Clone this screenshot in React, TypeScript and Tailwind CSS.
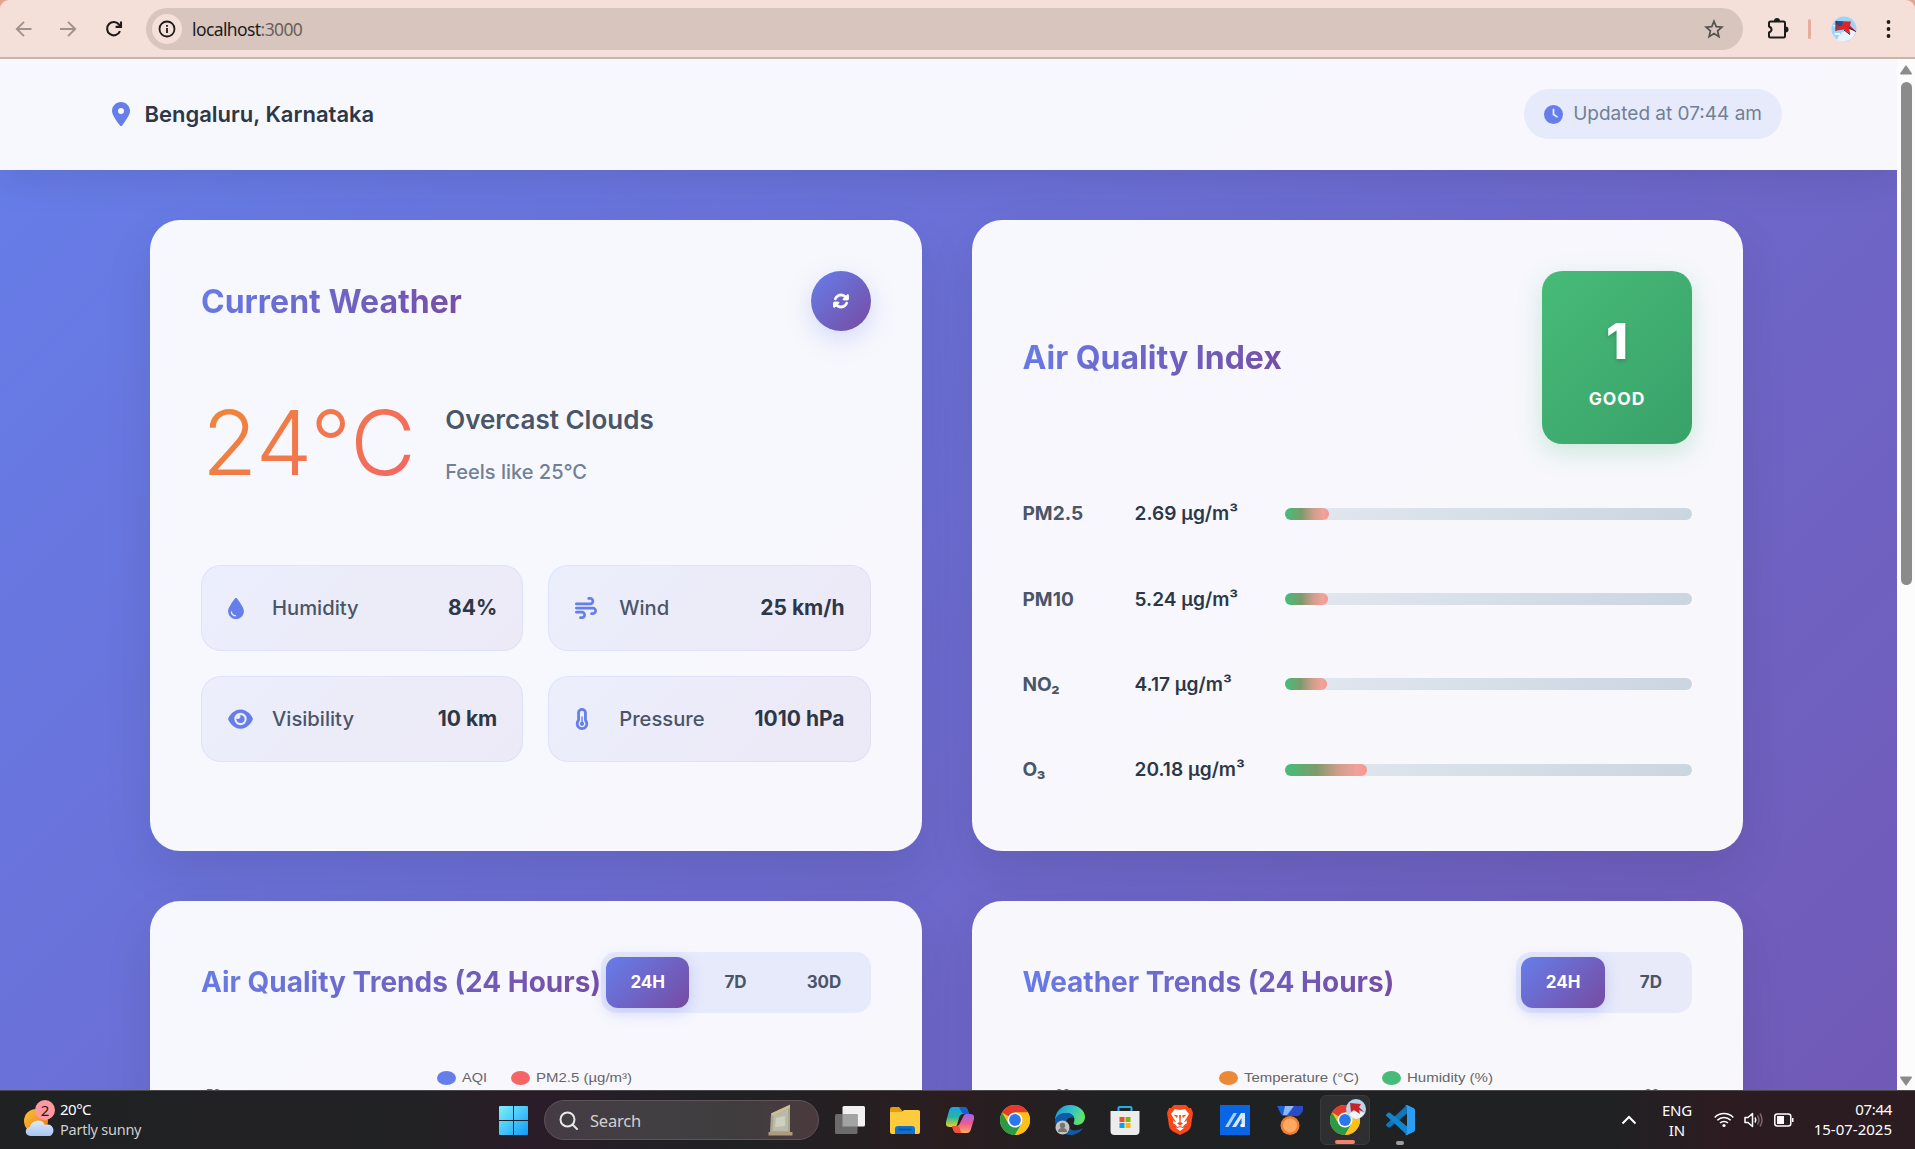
import React from "react";
import {
  FaLocationDot,
  FaClock,
  FaDroplet,
  FaWind,
  FaEye,
  FaTemperatureHalf,
  FaRotate,
} from "react-icons/fa6";

const ui = "font-['Noto_Sans','Open_Sans',sans-serif]";

function BrowserBar() {
  return (
    <div className="h-[59px] shrink-0 bg-[#e5a593]">
      <div className="flex h-full items-center rounded-t-[9px] border-b-2 border-[#c6b5ad] bg-[#f5e0d9] pl-3">
        <svg className="h-6 w-6 text-[#a0918c]" viewBox="0 0 24 24" fill="none" stroke="currentColor" strokeWidth="1.9">
          <path d="M19.500 12H5M12 4.800 4.800 12l7.200 7.200" />
        </svg>
        <svg className="ml-[20px] h-6 w-6 text-[#a0918c]" viewBox="0 0 24 24" fill="none" stroke="currentColor" strokeWidth="1.9">
          <path d="M4 12h15M12 4.800l7.200 7.200-7.200 7.200" />
        </svg>
        <svg className="ml-[22px] h-6 w-6 text-[#1d1b1a]" viewBox="0 0 24 24" fill="none" stroke="currentColor" strokeWidth="2.1">
          <path d="M18 14.200A6.700 6.700 0 1 1 17.300 7.800L19 9.600" />
          <path d="M19 4.500v5.400h-5.400" />
        </svg>
        <div className="ml-5 flex h-[42px] w-[1597px] items-center rounded-full bg-[#d8c6be] pl-1.5 pr-[19px]">
          <span className="flex h-[30px] w-[30px] items-center justify-center rounded-full bg-[#f5e0d9]">
            <svg className="h-[18px] w-[18px]" viewBox="0 0 18 18" fill="none" stroke="#1d1b1a" strokeWidth="1.8">
              <circle cx="9" cy="9" r="7.500" />
              <path d="M9 8v5M9 5v1.800" />
            </svg>
          </span>
          <span className={"mt-0.5 ml-2.5 flex-1 text-[17.500px] tracking-[-0.600px] text-[#1d1b1a] " + ui}>
            localhost<span className="text-[#6c605b]">:3000</span>
          </span>
          <svg className="h-5 w-5" viewBox="0 0 20 20" fill="none" stroke="#54504e" strokeWidth="1.7">
            <path d="M10 2.200l2.200 5.400 5.800.5-4.400 3.800 1.300 5.700-4.900-3-4.900 3 1.300-5.700L2 8.100l5.800-.5z" />
          </svg>
        </div>
        <svg className="ml-6 h-[22px] w-[22px]" viewBox="0 0 22 22" fill="none" stroke="#1d1b1a" strokeWidth="2" strokeLinejoin="round">
          <path d="M2 5q0-1.500 1.500-1.500h13q1.500 0 1.500 1.500v13q0 1.500-1.500 1.500h-13Q2 19.500 2 18v-3.500q2.500-1 2.500-3T2 8.500z" />
          <path d="M8 3a2 2 0 0 1 4 0zM18.500 9.500a2 2 0 0 1 0 4z" fill="#1d1b1a" />
        </svg>
        <span className="ml-[19px] h-5 w-[3px] rounded-full bg-[#e9ab9b]" />
        <svg className="ml-5 h-[26px] w-[26px]" viewBox="0 0 26 26">
          <circle cx="13" cy="13" r="12.500" fill="#9bd3fb" />
          <path d="M6 24Q10 12 25 14 24 24 13 25.500 9 25.500 6 24z" fill="#eaf3fd" />
          <path d="M3 17h6v2H4zM2 9h4v1.500H2z" fill="#eaf6ff" />
          <path d="M5 5l15 .5-1 4 6 6-7-3 1.500 6-6-5-8 1z" fill="#d8262b" />
          <path d="M5 5l7 .5-1 4-4 1z" fill="#274a94" />
          <path d="M5 5v10M13 14l6 4.500M18 12l7 3.500" stroke="#451417" fill="none" />
        </svg>
        <svg className="ml-5 h-5 w-5" viewBox="0 0 20 20" fill="#1d1b1a">
          <circle cx="11.500" cy="3" r="1.900" />
          <circle cx="11.500" cy="10" r="1.900" />
          <circle cx="11.500" cy="17" r="1.900" />
        </svg>
      </div>
    </div>
  );
}

const cardClass =
  "rounded-[30px] border border-white/20 bg-white/95 px-[50px] pt-[50px] shadow-[0_20px_50px_rgba(0,0,0,0.09)]";
const gradText = "bg-linear-[135deg] from-[#667eea] to-[#764ba2] bg-clip-text font-bold text-transparent";

function Stat({ icon, label, value }: { icon: React.ReactNode; label: string; value: string }) {
  return (
    <div className="flex h-[86px] items-center rounded-[20px] border border-[#667eea]/10 bg-linear-[135deg] from-[#667eea]/8 to-[#764ba2]/8 bg-origin-border px-[25px] text-[20.200px]">
      <span className="w-[30px] pl-px text-[#667eea]">{icon}</span>
      <span className="ml-[15px] flex-1 font-medium text-[#4a5568]">{label}</span>
      <span className="text-[21px] font-bold text-[#2d3748]">{value}</span>
    </div>
  );
}

const pollutants = [
  { name: "PM2.5", value: "2.69 µg/m³", width: 44 },
  { name: "PM10", value: "5.24 µg/m³", width: 43 },
  { name: "NO₂", value: "4.17 µg/m³", width: 42 },
  { name: "O₃", value: "20.18 µg/m³", width: 82 },
];

function Toggle({ items }: { items: string[] }) {
  return (
    <div className="flex h-[61px] shrink-0 gap-2.5 rounded-[15px] bg-[#667eea]/10 p-[5px] text-[17px] font-bold">
      {items.map((t, i) => (
        <span
          key={t}
          className={
            i === 0
              ? "flex w-[83.500px] items-center justify-center rounded-xl bg-linear-[135deg] from-[#667eea] to-[#764ba2] text-white shadow-[0_4px_15px_rgba(102,126,234,0.3)]"
              : "flex items-center justify-center px-[25px] font-bold text-[#4a5568]"
          }
        >
          {t}
        </span>
      ))}
    </div>
  );
}

function Legend({ color, label, width }: { color: string; label: string; width: number }) {
  return (
    <span className="flex items-center gap-1.5">
      <span className={"h-3.5 w-[19px] rounded-[50%] " + color} />
      <svg className="h-5" width={width} viewBox={`0 0 ${width} 20`}>
        <text x="0" y="14" textLength={width} lengthAdjust="spacingAndGlyphs" fill="#666" fontSize="12.500" fontFamily="Liberation Sans, sans-serif">
          {label}
        </text>
      </svg>
    </span>
  );
}

function Dashboard() {
  return (
    <div className="flex h-[1031px] shrink-0 bg-white font-[Inter,sans-serif]">
      <div className="h-full w-[1897px] overflow-hidden">
        <div className="h-[2220px] bg-linear-[135deg] from-[#667eea] to-[#764ba2]">
          <header className="flex h-[111px] items-center bg-white/95 pr-[115px] pb-px pl-[111.500px] shadow-[0_8px_40px_rgba(0,0,0,0.1)]">
            <FaLocationDot className="h-6 w-[18px] text-[#667eea]" />
            <span className="ml-[15px] flex-1 text-[22px] font-semibold text-[#2d3748]">Bengaluru, Karnataka</span>
            <div className="flex h-[50px] items-center gap-2.5 rounded-[25px] bg-[#667eea]/10 px-5 text-[19px] text-[#718096]">
              <FaClock className="text-[19px] text-[#667eea]" />
              Updated at 07:44 am
            </div>
          </header>
          <main className="grid grid-cols-2 gap-[50px] pl-[150px] pr-[154px] pt-[50px]">
            <section className={cardClass + " h-[631px]"}>
              <div className="flex h-[60px] items-center justify-between">
                <h2 className={"mt-0.5 text-[32px] " + gradText}>Current Weather</h2>
                <button className="flex h-[60px] w-[60px] items-center justify-center rounded-full bg-linear-[135deg] from-[#667eea] to-[#764ba2] text-base text-white shadow-[0_8px_25px_rgba(102,126,234,0.25)]">
                  <FaRotate stroke="currentColor" strokeWidth="28" />
                </button>
              </div>
              <div className="mt-[50px] flex h-[120px] items-center">
                <span className="ml-px bg-linear-[135deg] from-[#ed8936] to-[#f56565] bg-clip-text pt-[3px] text-[90px] leading-none font-light text-transparent">
                  24°C
                </span>
                <div className="ml-[29.500px] pt-1">
                  <p className="text-[26px] leading-[42px] font-semibold text-[#4a5568]">Overcast Clouds</p>
                  <p className="mt-[15px] text-xl leading-8 font-medium text-[#718096]">Feels like 25°C</p>
                </div>
              </div>
              <div className="mt-[64px] grid grid-cols-2 gap-[25px]">
                <Stat icon={<FaDroplet className="h-[21px] w-4" />} label="Humidity" value="84%" />
                <Stat icon={<FaWind className="h-[22px] w-[22px]" />} label="Wind" value="25 km/h" />
                <Stat icon={<FaEye className="h-[22px] w-[25px]" />} label="Visibility" value="10 km" />
                <Stat icon={<FaTemperatureHalf className="h-[22px] w-3.5" />} label="Pressure" value="1010 hPa" />
              </div>
            </section>
            <section className={cardClass + " h-[631px]"}>
              <div className="flex h-[173px] items-center justify-between">
                <h2 className={"text-[32px] " + gradText}>Air Quality Index</h2>
                <div className="flex h-[173px] w-[150px] flex-col items-center rounded-[20px] bg-linear-[135deg] from-[#48bb78] to-[#38a169] pt-[45px] text-white shadow-[0_8px_25px_rgba(72,187,120,0.25)]">
                  <span className="text-[50px] leading-[50px] font-extrabold [text-shadow:0_2px_4px_rgba(0,0,0,0.2)]">1</span>
                  <span className="mt-[18px] text-[17.500px] leading-[30px] font-bold tracking-[0.9px]">GOOD</span>
                </div>
              </div>
              <div className="mt-[27px] flex flex-col">
                {pollutants.map((p) => (
                  <div key={p.name} className="flex h-[85.300px] items-center text-[19.100px]">
                    <span className="w-[112px] font-bold text-[#4a5568]">{p.name}</span>
                    <span className="w-[150px] font-semibold text-[#2d3748]">{p.value}</span>
                    <div className="h-3 flex-1 rounded-full bg-linear-[135deg] from-[#e2e8f0] to-[#cbd5e0]">
                      <div
                        className="h-3 rounded-full bg-[linear-gradient(90deg,#48bb78_5%,#7f9a6c_38%,#d09d8b_65%,#efa39b_88%,#fb928b)]"
                        style={{ width: p.width }}
                      />
                    </div>
                  </div>
                ))}
              </div>
            </section>
            <section className={cardClass + " h-[800px]"}>
              <div className="flex justify-between">
                <h2 className={"-mt-0.5 self-center text-[28px] whitespace-nowrap " + gradText}>Air Quality Trends (24 Hours)</h2>
                <Toggle items={["24H", "7D", "30D"]} />
              </div>
              <div className="mt-[55px] flex gap-6 pl-[236px]">
                <Legend color="bg-[#667eea]" label="AQI" width={25} />
                <Legend color="bg-[#f56565]" label="PM2.5 (µg/m³)" width={96} />
              </div>
              <div className="pl-[5px] font-['Liberation_Sans',sans-serif] text-[13px] leading-3 text-[#666]">50</div>
            </section>
            <section className={cardClass + " h-[800px]"}>
              <div className="flex items-center justify-between">
                <h2 className={"-mt-0.5 text-[28px] " + gradText}>Weather Trends (24 Hours)</h2>
                <Toggle items={["24H", "7D"]} />
              </div>
              <div className="mt-[55px] flex gap-[23px] pl-[196px]">
                <Legend color="bg-[#ed8936]" label="Temperature (°C)" width={115} />
                <Legend color="bg-[#48bb78]" label="Humidity (%)" width={86} />
              </div>
              <div className="flex justify-between pr-[33px] pl-[33px] font-['Liberation_Sans',sans-serif] text-[13px] leading-3 text-[#666]">
                <span>30</span>
                <span>90</span>
              </div>
            </section>
          </main>
        </div>
      </div>
      <div className="flex w-[18px] flex-col items-center bg-[#fdfcfd]">
        <svg className="mt-1.5 h-2.5 w-3" viewBox="0 0 12 10" fill="#8b8b8b">
          <path d="M6 0l6 8.500q0 1-1 1H1q-1 0-1-1z" />
        </svg>
        <div className="mt-[7px] h-[503px] w-[11px] rounded-full bg-[#8b8b8b]" />
        <svg className="mt-auto mb-1 h-2.5 w-3" viewBox="0 0 12 10" fill="#8b8b8b">
          <path d="M6 10L0 1.500q0-1 1-1h10q1 0 1 1z" />
        </svg>
      </div>
    </div>
  );
}

function Chrome() {
  return (
    <svg className="h-[30px] w-[30px]" viewBox="0 0 30 30">
      <circle cx="15" cy="15" r="15" fill="#fbc116" />
      <path d="M15 15 2 7.500A15 15 0 0 1 28 7.500H15z" fill="#e33b2e" />
      <path d="M2 7.500A15 15 0 0 0 15 30L21.500 18.750 15 15 8.500 18.750z" fill="#2a9a48" />
      <path d="M15 7.500h13A15 15 0 0 1 15 30l6.500-11.250z" fill="#fbc116" />
      <circle cx="15" cy="15" r="7.500" fill="#fff" />
      <circle cx="15" cy="15" r="5.900" fill="#2b78ee" />
    </svg>
  );
}

function AppCell({ children }: { children: React.ReactNode }) {
  return <span className="flex h-[50px] w-[55px] items-center justify-center">{children}</span>;
}

function Taskbar() {
  return (
    <div className={"flex h-[59px] items-center border-t border-[#4c4a4a] bg-[linear-gradient(90deg,#202123_0%,#222224_22%,#2b1c28_28%,#231f26_33%,#202123_39%,#2a1d20_50%,#202123_58%,#202123_84%,#2c1c21_90%,#2b1c21_100%)] text-[15px] leading-5 text-white " + ui}>
      <div className="flex w-[499px] items-center pl-6">
        <svg className="mb-0.5 h-[38px] w-8" viewBox="0 0 32 38">
          <defs>
            <linearGradient id="sun" x2="1" y2="1"><stop stopColor="#f7c53a" /><stop offset="1" stopColor="#f36f11" /></linearGradient>
            <linearGradient id="cloud" x2="0" y2="1"><stop stopColor="#dbeafc" /><stop offset="1" stopColor="#a9c5f1" /></linearGradient>
          </defs>
          <circle cx="12" cy="21" r="12" fill="url(#sun)" />
          <path d="M6.500 36a4.500 4.500 0 0 1-.5-9 8 8 0 0 1 15-2 6 6 0 0 1 5 11z" fill="url(#cloud)" />
          <circle cx="21" cy="10" r="10" fill="#ff98a0" />
          <text x="21" y="15.500" textAnchor="middle" fontSize="15" fill="#221" fontFamily="Noto Sans, sans-serif">2</text>
        </svg>
        <div className="mb-0.5 ml-1">
          <div className="text-[15px] tracking-[-0.500px]">20°C</div>
          <div className="text-[14.500px] tracking-[-0.250px] text-[#cfcfcf]">Partly sunny</div>
        </div>
      </div>
      <svg className="h-[29px] w-[29px]" viewBox="0 0 29 29">
        <defs>
          <linearGradient id="win" x2="1" y2="1"><stop stopColor="#7df1fd" /><stop offset="1" stopColor="#119bf5" /></linearGradient>
        </defs>
        <path d="M0 1q0-1 1-1h13v14H0zM15 0h13q1 0 1 1v13H15zM0 15h14v14H1q-1 0-1-1zM15 15h14v13q0 1-1 1H15z" fill="url(#win)" />
      </svg>
      <div className="ml-4 flex h-10 w-[275px] items-center rounded-full border border-[#5d5559] bg-[linear-gradient(90deg,#463b45,#413f41_40%,#403d3f_70%,#4a3a3d)] pl-3.5 pr-[25px]">
        <svg className="h-[19px] w-[19px]" viewBox="0 0 19 19" fill="none" stroke="#e8e8e8" strokeWidth="2">
          <circle cx="8.500" cy="8.500" r="7" />
          <path d="M13.500 13.500l4.500 4.500" strokeLinecap="round" />
        </svg>
        <span className="mt-0.5 ml-3 flex-1 text-[16.500px] tracking-[-0.200px] text-[#d2d0d1]">Search</span>
        <svg className="h-8 w-[25px]" viewBox="0 0 25 32">
          <path d="M3 9.500 22 .8V28H2z" fill="#a9a590" />
          <path d="M3 9.500 22 .8v3L5 12z" fill="#d2bd92" />
          <path d="M5.500 12 20 5v22H4.500z" fill="#b9baa9" />
          <path d="M8 14l9-2v10l-10 1z" fill="#cfcfbe" />
          <path d="M.5 28h24v3.500H.5z" fill="#ad9b7b" />
        </svg>
      </div>
      <div className="ml-[3.500px] flex">
        <AppCell>
          <svg className="h-7 w-[30px]" viewBox="0 0 30 28">
            <rect x="7.500" width="22.500" height="20.500" rx="1.500" fill="#f1f1f1" />
            <rect y="8" width="22.500" height="20" rx="1.500" fill="#6b6b6b" />
            <path d="M7.500 8h15v12.500h-15z" fill="#a3a3a3" />
          </svg>
        </AppCell>
        <AppCell>
          <svg className="h-[27px] w-[30px]" viewBox="0 0 30 27">
            <path d="M0 2q0-2 2-2h7l3.500 4H30v8H0z" fill="#e29d08" />
            <path d="M0 5h12l2-2h14q2 0 2 2v20q0 2-2 2H2q-2 0-2-2z" fill="#ffcb3d" />
            <path d="M5 27v-5q0-3 3-3h14q3 0 3 3v5z" fill="#0f72cb" />
            <path d="M8.500 22.500h13" stroke="#0a4d92" strokeWidth="1.500" />
          </svg>
        </AppCell>
        <AppCell>
          <svg className="h-7 w-7" viewBox="0 0 28 28">
            <defs>
              <linearGradient id="cpa" x2="0" y2="1"><stop stopColor="#15a4ee" /><stop offset=".5" stopColor="#29b3a0" /><stop offset="1" stopColor="#e9d329" /></linearGradient>
              <linearGradient id="cpb" x2="0" y2="1"><stop stopColor="#9a65ee" /><stop offset=".5" stopColor="#ee5b91" /><stop offset="1" stopColor="#ffaa5e" /></linearGradient>
            </defs>
            <path d="M7 1h11q3 0 4 4l1 3h-6q-3 0-4 4l-2 7q-1 2-3 2H4q-5 0-4-5L3 5q1-4 4-4z" fill="url(#cpa)" />
            <path d="M13 1h5q3 0 4 4l1 3h-5q-2 0-3-3z" fill="#1660cf" />
            <path d="M20 8h4q5 0 4 5l-3 10q-1 4-4 4H11q-3 0-4-4l-1-3h5q2 0 3-3l3-6q1-3 3-3z" fill="url(#cpb)" />
            <path d="M6 20h6q1 0 2 3 1 4 2 4h-5q-3 0-4-4z" fill="#ee5136" />
          </svg>
        </AppCell>
        <AppCell><Chrome /></AppCell>
        <AppCell>
          <svg className="h-[30px] w-[30px]" viewBox="0 0 30 30">
            <defs>
              <linearGradient id="edge" x2="1" y2=".3"><stop stopColor="#1a93dc" /><stop offset=".6" stopColor="#35c3ca" /><stop offset="1" stopColor="#62e06c" /></linearGradient>
            </defs>
            <path d="M0 15A15 15 0 0 1 15 0c9 0 15 6 15 12 0 5-4 8-8 8-3 0-4-1-3-3 2-6-3-9-8-9Q3 8 0 15z" fill="url(#edge)" />
            <path d="M0 15q3-7 11-7c4 0 7 2 8 5-7-2-9 4-7 8 3 5 10 6 16 2-4 6-9 7-13 7A15 15 0 0 1 0 15z" fill="#105ba8" />
            <circle cx="7.500" cy="22.500" r="7" fill="#c5c3bf" />
            <circle cx="7.500" cy="20.500" r="2.700" fill="#77736f" />
            <path d="M3 27q0-4 4.500-4t4.500 4z" fill="#77736f" />
          </svg>
        </AppCell>
        <AppCell>
          <svg className="h-[30px] w-[30px]" viewBox="0 0 30 30">
            <path d="M8.500 6V2.800Q8.500 2 9.500 2h11q1 0 1 .8V6" stroke="#25aee8" strokeWidth="2" fill="none" />
            <path d="M.5 6h29v20q0 4-4 4h-21q-4 0-4-4z" fill="#ececec" />
            <path d="M9.500 12h5v5h-5z" fill="#f14f22" />
            <path d="M15.500 12h5v5h-5z" fill="#7fb900" />
            <path d="M9.500 18h5v5h-5z" fill="#05a3ed" />
            <path d="M15.500 18h5v5h-5z" fill="#fdb901" />
          </svg>
        </AppCell>
        <AppCell>
          <svg className="h-[30px] w-[26px]" viewBox="0 0 26 30">
            <path d="M7 0h12l3 3h2l2 5-2 13q-1 4-5 6l-6 3-6-3q-4-2-5-6L0 8l2-5h2z" fill="#fb471a" />
            <path d="M8 4l5 1 5-1 4 5-3 5 1 4-4 3 1 2-4 3-4-3 1-2-4-3 1-4-3-5z" fill="#fff" />
            <path d="M6.500 9.500l4.500 1-1 2.500zM19.500 9.500l-4.500 1 1 2.500zM12 10h2l-.5 7 2.500 1.500-3 2-3-2 2.500-1.500z" fill="#fb471a" />
            <path d="M9 23l4-1.500 4 1.500M6.500 14l2 3M19.500 14l-2 3" stroke="#fb471a" fill="none" />
          </svg>
        </AppCell>
        <AppCell>
          <svg className="h-[30px] w-[30px]" viewBox="0 0 30 30">
            <path d="M0 0h30v30H0z" fill="#0866e4" />
            <path d="M5 22 13.500 8H17L8.500 22z" fill="#a9d0fc" />
            <path d="M12 22 21 8h4v14h-3.500v-9l-5.500 9z" fill="#d7e9fe" />
            <circle cx="22" cy="20.500" r="1.700" fill="#fff" />
          </svg>
        </AppCell>
        <AppCell>
          <svg className="h-[30px] w-[28px]" viewBox="0 0 28 30">
            <path d="M1 1h18l-6 10H8q-2 0-3-2z" fill="#1b5fd9" />
            <path d="M9 1h9l-7 9H7z" fill="#92b7f8" />
            <path d="M18 1h9v4q-1 4-5 6h-9z" fill="#2a4bc9" />
            <circle cx="14" cy="20.500" r="9.500" fill="#ee7d35" />
            <circle cx="14" cy="20.500" r="7" fill="#ffa862" />
          </svg>
        </AppCell>
        <AppCell>
          <span className="relative flex h-[50px] w-[50px] items-center justify-center rounded-md border border-[#3a3a3c] bg-[#2f2f31]">
            <Chrome />
            <svg className="absolute top-[3px] right-[3px] h-5 w-5" viewBox="0 0 20 20">
              <circle cx="10" cy="10" r="10" fill="#b5d5ed" />
              <path d="M3 15q6-5 15-1-2 5-8 6-5-1-7-5z" fill="#eef4f9" />
              <path d="M4 4l11 1-2 3 5 5-5-2 1 4-6-4-3 2z" fill="#c9222a" />
            </svg>
            <span className="absolute bottom-0 left-3.5 h-1 w-5 rounded-full bg-[#f38469]" />
          </span>
        </AppCell>
        <AppCell>
          <span className="relative flex h-[50px] w-[50px] items-center justify-center">
            <svg className="h-[30px] w-[30px]" viewBox="0 0 30 30">
              <path d="M22 0 2 18.500q-2 1-.3 2.500L3 22.200q1 .7 2 0L24 7z" fill="#0f76bd" />
              <path d="M22 30 2 11.500q-2-1-.3-2.500L3 7.800q1-.7 2 0L24 23z" fill="#1285cf" />
              <path d="M22 0l6.500 3Q30 3.800 30 5v20q0 1.200-1.500 2L22 30q-1 .3-2-1 2 1 2-1.500v-25Q22 0 20 1q1-1.200 2-1z" fill="#2c9df0" />
            </svg>
            <span className="absolute bottom-0 left-[21px] h-1 w-2 rounded-full bg-[#9d9d9d]" />
          </span>
        </AppCell>
      </div>
      <div className="ml-auto flex items-center pr-[23px]">
        <svg className="h-3 w-4" viewBox="0 0 16 12" fill="none" stroke="#fff" strokeWidth="2">
          <path d="M1.500 9.500 8 3l6.500 6.500" />
        </svg>
        <div className="ml-[25px] w-[30px] text-center text-[15px]">
          <div className="-mx-2 tracking-[-0.200px]">ENG</div>
          <div>IN</div>
        </div>
        <svg className="ml-[22px] h-5 w-5" viewBox="0 0 20 20" fill="none" stroke="#fff" strokeWidth="1.500">
          <path d="M.7 7.500a13 13 0 0 1 18.600 0M3.300 10.300a9.500 9.500 0 0 1 13.400 0M6 13a5.800 5.800 0 0 1 8 0" />
          <circle cx="10" cy="15.500" r="1.600" fill="#fff" stroke="none" />
        </svg>
        <svg className="ml-2.5 h-5 w-5" viewBox="0 0 20 20" fill="none" stroke="#fff" strokeWidth="1.500">
          <path d="M1 7.500h3L8.500 3.500v13L4 12.500H1z" strokeLinejoin="round" />
          <path d="M11 7.500q1.600 2.500 0 5" />
          <path d="M13.500 5.500q3 4.500 0 9M16 3.500q4 6.500 0 13" stroke="#77696d" />
        </svg>
        <svg className="ml-2.5 h-5 w-5" viewBox="0 0 20 20" fill="none" stroke="#fff" strokeWidth="1.500">
          <rect x=".8" y="4" width="16" height="12" rx="2.500" />
          <path d="M3 6h7v8H3zM18 8h1.500v4H18z" fill="#fff" stroke="none" />
        </svg>
        <div className="mb-0.5 ml-5 w-[78px] text-right text-[15px] whitespace-nowrap">
          <div className="tracking-[-0.300px]">07:44</div>
          <div className="-ml-4">15-07-2025</div>
        </div>
      </div>
    </div>
  );
}

export default function App() {
  return (
    <div className="flex h-[1149px] w-[1915px] flex-col overflow-hidden">
      <BrowserBar />
      <Dashboard />
      <Taskbar />
    </div>
  );
}
